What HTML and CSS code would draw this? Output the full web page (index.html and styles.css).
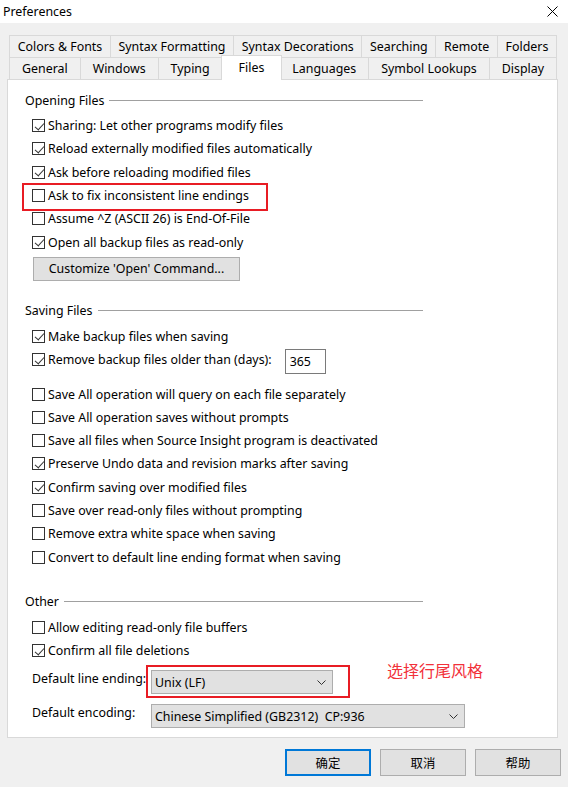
FILE: index.html
```html
<!DOCTYPE html>
<html lang="en">
<head>
  <meta charset="UTF-8"/>
  <title>Preferences</title>
  <link rel="stylesheet" href="styles.css">
</head>
<body>
  <header class="titlebar">
    <span class="title">Preferences</span>
    <svg class="close" viewBox="0 0 11 11">
      <path d="M0.5 0.5L10.5 10.5M10.5 0.5L0.5 10.5"/>
    </svg>
  </header>

  <main class="dialog">
    <div class="tabs">
      <div class="tab-row">
        <div class="tab">Colors &amp; Fonts</div>
        <div class="tab">Syntax Formatting</div>
        <div class="tab">Syntax Decorations</div>
        <div class="tab">Searching</div>
        <div class="tab">Remote</div>
        <div class="tab">Folders</div>
      </div>
      <div class="tab-row">
        <div class="tab">General</div>
        <div class="tab">Windows</div>
        <div class="tab">Typing</div>
        <div class="tab active">Files</div>
        <div class="tab">Languages</div>
        <div class="tab">Symbol Lookups</div>
        <div class="tab">Display</div>
      </div>
    </div>

    <div class="panel">
      <section class="group">
        <div class="group-head"><span>Opening Files</span></div>
        <div class="check on"><span class="box"></span>Sharing: Let other programs modify files</div>
        <div class="check on"><span class="box"></span>Reload externally modified files automatically</div>
        <div class="check on"><span class="box"></span>Ask before reloading modified files</div>
        <div class="check"><span class="box"></span>Ask to fix inconsistent line endings</div>
        <div class="check"><span class="box"></span>Assume ^Z (ASCII 26) is End-Of-File</div>
        <div class="check on"><span class="box"></span>Open all backup files as read-only</div>
        <button class="btn wide">Customize 'Open' Command...</button>
      </section>

      <section class="group saving">
        <div class="group-head"><span>Saving Files</span></div>
        <div class="check on"><span class="box"></span>Make backup files when saving</div>
        <div class="check on spaced"><span class="box"></span>Remove backup files older than (days):<span class="num">365</span></div>
        <div class="check"><span class="box"></span>Save All operation will query on each file separately</div>
        <div class="check"><span class="box"></span>Save All operation saves without prompts</div>
        <div class="check"><span class="box"></span>Save all files when Source Insight program is deactivated</div>
        <div class="check on"><span class="box"></span>Preserve Undo data and revision marks after saving</div>
        <div class="check on"><span class="box"></span>Confirm saving over modified files</div>
        <div class="check"><span class="box"></span>Save over read-only files without prompting</div>
        <div class="check"><span class="box"></span>Remove extra white space when saving</div>
        <div class="check"><span class="box"></span>Convert to default line ending format when saving</div>
      </section>

      <section class="group other">
        <div class="group-head"><span>Other</span></div>
        <div class="check"><span class="box"></span>Allow editing read-only file buffers</div>
        <div class="check on"><span class="box"></span>Confirm all file deletions</div>
        <div class="field first">
          <span class="field-label">Default line ending:</span>
          <div class="select short"><span>Unix (LF)</span><svg class="chevron" viewBox="0 0 9 5"><path d="M0.5 0.5L4.5 4.5L8.5 0.5"/></svg></div>
        </div>
        <div class="field">
          <span class="field-label">Default encoding:</span>
          <div class="select long"><span>Chinese Simplified (GB2312)&nbsp; CP:936</span><svg class="chevron" viewBox="0 0 9 5"><path d="M0.5 0.5L4.5 4.5L8.5 0.5"/></svg></div>
        </div>
      </section>

      <!-- annotations drawn on top of the dialog -->
      <div class="mark mark-ask"></div>
      <div class="mark mark-ending"></div>
      <div class="note">选择行尾风格</div>
    </div>

    <div class="actions">
      <button class="btn cjk default">确定</button>
      <button class="btn cjk">取消</button>
      <button class="btn cjk">帮助</button>
    </div>
  </main>
</body>
</html>
```

FILE: styles.css
```css
* {
  margin: 0;
  padding: 0;
  box-sizing: border-box;
}

body {
  font-family: 'Noto Sans', sans-serif;
  font-size: 12.4px;
  color: #000;
  background-color: #f0f0f0;
  width: 568px;
  height: 787px;
  overflow: hidden;
}

.titlebar {
  height: 23px;
  background-color: #fff;
  display: flex;
  justify-content: space-between;
  align-items: center;
  padding: 0 10px 0 3px;
}

.close {
  width: 11px;
  height: 11px;
  fill: none;
  stroke: #000;
  stroke-width: 1;
}

.dialog {
  padding: 12px 7px 0 7px;
}

/* Tabs */
.tabs {
  margin: 0 4px 0 2px;
}

.tab-row {
  display: flex;
  height: 22px;
}

.tab {
  flex: 1 1 auto;
  display: flex;
  justify-content: center;
  align-items: center;
  padding: 0 6px;
  border: 1px solid #d9d9d9;
  border-bottom: none;
  margin-left: -1px;
  white-space: nowrap;
  background-color: #f0f0f0;
}

.tab:first-child {
  margin-left: 0;
}

.tab.active {
  background-color: #fff;
  margin: -2px -2px -1px -2px;
  position: relative;
  z-index: 1;
  padding: 0 11px 2px;
}

/* Panel */
.panel {
  position: relative;
  height: 659px;
  margin-right: 3px;
  background-color: #fff;
  border: 1px solid #d9d9d9;
  padding-top: 10px;
}

.group-head {
  display: flex;
  align-items: center;
  gap: 5px;
  width: 398px;
  height: 20px;
  margin: 0 0 4px 17px;
}

.group-head::after {
  content: "";
  flex: 1;
  height: 1px;
  background-color: #a0a0a0;
}

.saving .group-head {
  margin-top: 20px;
}

.other .group-head {
  margin-top: 23px;
}

.check {
  display: flex;
  align-items: center;
  height: 23.3px;
  padding-left: 24px;
  white-space: nowrap;
}

.box {
  position: relative;
  flex: none;
  width: 13px;
  height: 13px;
  border: 1px solid #333;
  background-color: #fff;
  margin-right: 3px;
}

.check.on .box::after {
  content: "";
  position: absolute;
  left: 3.5px;
  top: 0.5px;
  width: 4px;
  height: 8px;
  border-right: 1px solid #333;
  border-bottom: 1px solid #333;
  transform: rotate(42deg);
}

.check.spaced {
  margin-bottom: 11px;
}

.num {
  align-self: flex-start;
  margin: 1px 0 0 13px;
  width: 41px;
  height: 25px;
  border: 1px solid #7a7a7a;
  padding: 0 4px;
  display: flex;
  align-items: center;
}

.btn {
  font: inherit;
  color: #000;
  background-color: #e1e1e1;
  border: 1px solid #adadad;
  cursor: pointer;
}

.btn.wide {
  display: block;
  width: 207px;
  height: 24px;
  margin: 3px 0 0 25px;
}

.field {
  display: flex;
  align-items: flex-start;
  padding-left: 24px;
  margin-top: 10px;
}

.field.first {
  margin-top: 8px;
}

.field-label {
  width: 119px;
  line-height: 17px;
}

.select {
  display: flex;
  justify-content: space-between;
  align-items: center;
  height: 24px;
  background-color: #e1e1e1;
  border: 1px solid #adadad;
  padding: 0 6px 0 3px;
}

.select.short {
  width: 182px;
}

.select.long {
  width: 314px;
}

.chevron {
  width: 9px;
  height: 5px;
  fill: none;
  stroke: #333;
  stroke-width: 1;
}

/* Annotations */
.mark {
  position: absolute;
  border: 2px solid #e81c24;
}

.mark-ask {
  left: 14px;
  top: 103px;
  width: 246px;
  height: 28px;
}

.mark-ending {
  left: 138px;
  top: 585px;
  width: 204px;
  height: 33px;
}

.note {
  position: absolute;
  left: 379px;
  top: 580px;
  font-family: 'Noto Sans CJK SC', sans-serif;
  font-size: 16px;
  line-height: 20px;
  color: #f2313a;
}

/* Buttons */
.actions {
  display: flex;
  justify-content: flex-end;
  gap: 9px;
  margin-top: 11px;
}

.btn.cjk {
  font-family: 'Noto Sans CJK SC', sans-serif;
  width: 86px;
  height: 27px;
}

.btn.default {
  border: 2px solid #0078d7;
}
```
